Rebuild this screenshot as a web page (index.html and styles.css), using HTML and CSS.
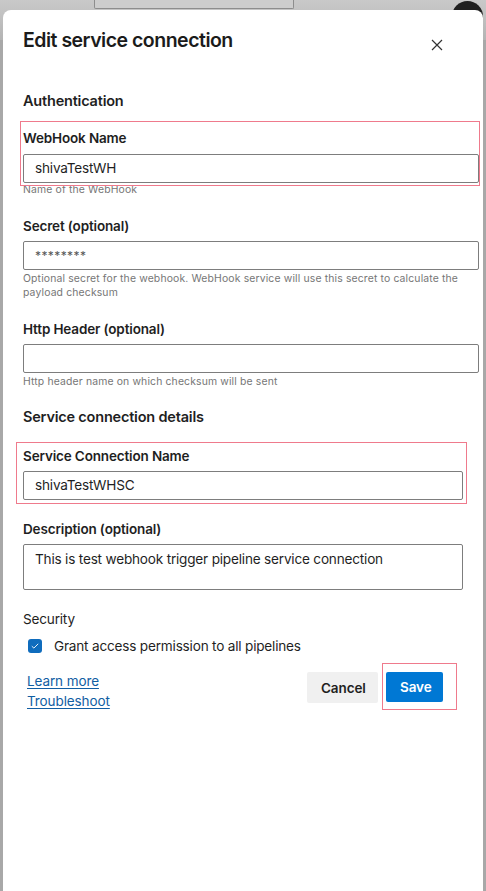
FILE: index.html
```html
<!DOCTYPE html>
<html lang="en">
<head>
<meta charset="utf-8">
<title>Edit service connection</title>
<link rel="stylesheet" href="styles.css">
</head>
<body>
  <div class="backdrop">
    <div class="topbar">
      <div class="search-box"></div>
      <div class="avatar"></div>
    </div>
  </div>

  <div class="panel" role="dialog" aria-label="Edit service connection">
    <div class="panel-header">
      <h1 class="panel-title">Edit service connection</h1>
      <button class="close-btn" aria-label="Close">
        <svg width="12" height="12" viewBox="0 0 12 12"><path d="M1 1L11 11M11 1L1 11" stroke="#333" stroke-width="1.2" fill="none"/></svg>
      </button>
    </div>

    <div class="panel-body">
      <h2 class="section-title">Authentication</h2>

      <div class="field field-wide highlight hl-webhook">
        <label class="field-label">WebHook Name</label>
        <div class="text-input">shivaTestWH</div>
      </div>
      <div class="help">Name of the WebHook</div>

      <div class="field field-wide">
        <label class="field-label">Secret (optional)</label>
        <div class="text-input secret">********</div>
        <div class="help">Optional secret for the webhook. WebHook service will use this secret to calculate the payload checksum</div>
      </div>

      <div class="field field-wide">
        <label class="field-label">Http Header (optional)</label>
        <div class="text-input"></div>
        <div class="help">Http header name on which checksum will be sent</div>
      </div>

      <h2 class="section-title details-title">Service connection details</h2>

      <div class="field highlight hl-name">
        <label class="field-label">Service Connection Name</label>
        <div class="text-input">shivaTestWHSC</div>
      </div>

      <div class="field">
        <label class="field-label">Description (optional)</label>
        <div class="text-input textarea">This is test webhook trigger pipeline service connection</div>
      </div>

      <div class="security">Security</div>
      <label class="checkbox-row">
        <span class="checkbox">
          <svg width="8" height="6" viewBox="0 0 8 6"><path d="M0.8 3.2L2.9 5.1L7.2 0.8" stroke="#fff" stroke-width="0.9" fill="none"/></svg>
        </span>
        <span>Grant access permission to all pipelines</span>
      </label>

      <div class="footer">
        <div class="links">
          <a href="#" class="link">Learn more</a>
          <a href="#" class="link">Troubleshoot</a>
        </div>
        <div class="actions">
          <button class="btn btn-secondary">Cancel</button>
          <span class="save-wrap"><button class="btn btn-primary">Save</button></span>
        </div>
      </div>
    </div>
  </div>
</body>
</html>
```

FILE: styles.css
```css
* { box-sizing: border-box; }

html, body {
  margin: 0;
  height: 100%;
}

body {
  background: #a8a8a8;
  font-family: Inter, "Liberation Sans", sans-serif;
  color: #1f1f1f;
  overflow: hidden;
  position: relative;
}

/* page behind the dimmed overlay */
.backdrop {
  height: 100%;
}

.topbar {
  height: 40px;
  background: linear-gradient(#c9c9c9, #b4b4b4);
  display: flex;
  align-items: flex-start;
  padding-left: 94px;
  position: relative;
}

.search-box {
  width: 200px;
  height: 9px;
  border: 1px solid #8d8d8d;
  border-top: none;
  border-radius: 0 0 2px 2px;
  background: #cdcdcd;
}

.avatar {
  position: absolute;
  right: 3px;
  top: 1px;
  width: 31px;
  height: 31px;
  border-radius: 50%;
  background: #202020;
}

/* side panel */
.panel {
  position: absolute;
  left: 3px;
  right: 3px;
  top: 10px;
  bottom: -20px;
  background: #fff;
  border-radius: 8px 8px 0 0;
}

.panel-header {
  display: flex;
  align-items: flex-start;
  justify-content: space-between;
  padding: 18px 40px 0 20px;
  height: 81px;
}

.panel-title {
  margin: 0;
  font-size: 19.5px;
  font-weight: 600;
  letter-spacing: -0.5px;
  line-height: 24px;
  color: #1b1b1b;
}

.close-btn {
  border: none;
  background: none;
  padding: 0;
  margin-top: 11px;
  width: 12px;
  height: 12px;
  display: flex;
}

.panel-body {
  padding: 0 0 0 20px;
  display: flex;
  flex-direction: column;
}

.section-title {
  margin: 0;
  font-size: 14.5px;
  font-weight: 600;
  letter-spacing: -0.2px;
  line-height: 20px;
  color: #1f1f1f;
}

.details-title {
  margin-top: 18px;
}

.field {
  display: flex;
  flex-direction: column;
  width: 440px;
}

.field-wide {
  width: 456px;
}

.field-label {
  font-size: 13.5px;
  font-weight: 600;
  letter-spacing: -0.15px;
  line-height: 18px;
  margin-bottom: 6px;
  color: #1f1f1f;
}

.hl-webhook .field-label {
  margin-bottom: 7px;
}

.text-input {
  height: 29px;
  border: 1px solid #7d7d7d;
  border-radius: 2px;
  padding: 0 11px;
  font-size: 13.6px;
  letter-spacing: -0.2px;
  line-height: 27px;
  color: #1f1f1f;
}

.text-input.secret {
  font-size: 12px;
  color: #555;
  letter-spacing: 0.4px;
}

.text-input.textarea {
  height: 46px;
  line-height: 18px;
  padding-top: 5px;
}

.help {
  font-size: 10.4px;
  line-height: 14.5px;
  color: #767676;
  letter-spacing: 0.15px;
  margin-top: 1px;
}

/* red annotation frames */
.highlight {
  position: relative;
}

.highlight::after {
  content: "";
  position: absolute;
  border: 1.5px solid #ef7a8c;
  pointer-events: none;
}

.hl-webhook {
  margin-top: 18px;
}

.hl-webhook::after {
  left: -3px;
  top: -8px;
  right: -1px;
  bottom: -3px;
}

.hl-webhook + .help {
  margin-top: 0;
}

.hl-name {
  margin-top: 20px;
}

.hl-name::after {
  left: -7px;
  top: -5px;
  right: -4px;
  bottom: -4px;
}

.field-wide + .field-wide,
.help + .field-wide {
  margin-top: 19px;
}

.field-wide .help {
  margin-top: 2px;
}

.hl-name + .field {
  margin-top: 20px;
}

.security {
  margin-top: 20px;
  font-size: 13.6px;
  letter-spacing: -0.2px;
  line-height: 18px;
  color: #1f1f1f;
}

.checkbox-row {
  display: flex;
  align-items: center;
  gap: 12px;
  margin-top: 10px;
  padding-left: 5px;
  font-size: 13.6px;
  letter-spacing: -0.2px;
  color: #1f1f1f;
}

.checkbox {
  width: 14px;
  height: 14px;
  border-radius: 3px;
  background: #0f6cbd;
  display: flex;
  align-items: center;
  justify-content: center;
}

.footer {
  display: flex;
  justify-content: space-between;
  align-items: flex-start;
  width: 420px;
  margin-top: 15px;
}

.links {
  display: flex;
  flex-direction: column;
  padding-left: 4px;
  padding-top: 2px;
}

.link {
  font-size: 13.5px;
  line-height: 20px;
  color: #115ea3;
  text-decoration: underline;
  text-underline-offset: 2px;
  letter-spacing: -0.1px;
}

.actions {
  display: flex;
  gap: 8px;
  align-items: flex-start;
  padding-top: 3px;
}

.btn {
  border: none;
  border-radius: 2px;
  font-family: inherit;
  font-size: 13.5px;
  font-weight: 600;
  height: 31px;
  padding: 0 14px;
  letter-spacing: -0.1px;
}

.btn-secondary {
  background: #f0f0f0;
  color: #1f1f1f;
  width: 71px;
}

.btn-primary {
  background: #0078d4;
  color: #fff;
  width: 57px;
  height: 30px;
}

.save-wrap {
  position: relative;
  display: block;
}

.save-wrap::after {
  content: "";
  position: absolute;
  left: -4px;
  top: -9px;
  right: -14px;
  bottom: -8px;
  border: 1.5px solid #ef7a8c;
}
```
